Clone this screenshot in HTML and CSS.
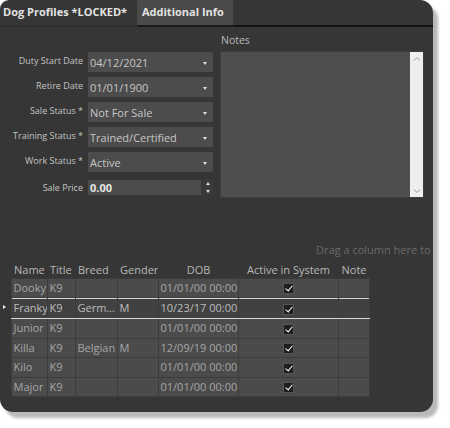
FILE: index.html
```html
<!DOCTYPE html>
<html>
<head>
<meta charset="utf-8">
<link rel="stylesheet" href="styles.css">
</head>
<body>
<div class="window">
  <div class="tabs">
    <div class="tab active">Dog Profiles *LOCKED*</div>
    <div class="tab">Additional Info</div>
    <div class="tab-fill"></div>
  </div>
  <div class="top">
    <div class="form">
      <label>Duty Start Date</label>
      <div class="combo"><span>04/12/2021</span><i class="arrow"></i></div>
      <label>Retire Date</label>
      <div class="combo"><span>01/01/1900</span><i class="arrow"></i></div>
      <label>Sale Status *</label>
      <div class="combo"><span>Not For Sale</span><i class="arrow"></i></div>
      <label>Training Status *</label>
      <div class="combo"><span>Trained/Certified</span><i class="arrow"></i></div>
      <label>Work Status *</label>
      <div class="combo"><span>Active</span><i class="arrow"></i></div>
      <label class="price-label">Sale Price</label>
      <div class="spin"><div class="spin-box">0.00</div><div class="spin-btns"><i class="up"></i><i class="down"></i></div></div>
    </div>
    <div class="notes">
      <div class="notes-title">Notes</div>
      <div class="textarea">
        <div class="vscroll">
          <svg width="8" height="6" viewBox="0 0 8 6"><path d="M1 4.5 L4 1.5 L7 4.5" fill="none" stroke="#9a9a9a" stroke-width="1"/></svg>
          <svg width="8" height="6" viewBox="0 0 8 6"><path d="M1 1.5 L4 4.5 L7 1.5" fill="none" stroke="#9a9a9a" stroke-width="1"/></svg>
        </div>
      </div>
    </div>
  </div>
  <div class="group-panel"><span>Drag a column here to</span></div>
  <table class="grid">
    <colgroup>
      <col class="c-ind"><col class="c-name"><col class="c-title"><col class="c-breed"><col class="c-gender"><col class="c-dob"><col class="c-active"><col class="c-note">
    </colgroup>
    <thead>
      <tr><th></th><th>Name</th><th>Title</th><th>Breed</th><th>Gender</th><th class="center">DOB</th><th class="center">Active in System</th><th class="center">Note</th></tr>
    </thead>
    <tbody>
      <tr><td class="ind"></td><td>Dooky</td><td>K9</td><td></td><td></td><td>01/01/00 00:00</td><td class="center"><span class="chk"></span></td><td></td></tr>
      <tr class="sel"><td class="ind"><i class="rowmark"></i></td><td>Franky</td><td>K9</td><td>Germ…</td><td>M</td><td>10/23/17 00:00</td><td class="center"><span class="chk"></span></td><td></td></tr>
      <tr><td class="ind"></td><td>Junior</td><td>K9</td><td></td><td></td><td>01/01/00 00:00</td><td class="center"><span class="chk"></span></td><td></td></tr>
      <tr><td class="ind"></td><td>Killa</td><td>K9</td><td>Belgian</td><td>M</td><td>12/09/19 00:00</td><td class="center"><span class="chk"></span></td><td></td></tr>
      <tr><td class="ind"></td><td>Kilo</td><td>K9</td><td></td><td></td><td>01/01/00 00:00</td><td class="center"><span class="chk"></span></td><td></td></tr>
      <tr><td class="ind"></td><td>Major</td><td>K9</td><td></td><td></td><td>01/01/00 00:00</td><td class="center"><span class="chk"></span></td><td></td></tr>
    </tbody>
  </table>
</div>
</body>
</html>
```
FILE: styles.css
```css
* { box-sizing: border-box; }
html, body { margin: 0; padding: 0; background: #ffffff; }
body { width: 450px; height: 428px; overflow: hidden; font-family: "Open Sans", "Noto Sans", sans-serif; }

.window {
  width: 433px;
  height: 412px;
  background: #363636;
  border-radius: 9px 13px 13px 13px;
  box-shadow: 5px 6px 3px rgba(0,0,0,0.28);
  overflow: hidden;
  position: relative;
}

.tabs {
  display: flex;
  height: 27px;
}
.tab {
  height: 27px;
  padding: 4px 4px 0 3px;
  font-size: 11px;
  font-weight: bold;
  color: #e2e2e2;
  white-space: nowrap;
  border-bottom: 2px solid #1a1a1a;
}
.tab.active {
  width: 136px;
  border-bottom: 1px solid #2c2c2c;
}
.tab:not(.active) {
  width: 96px;
  background: #4a4a4a;
  padding-left: 5px;
  margin-left: 1px;
}
.tab-fill { flex: 1; border-bottom: 2px solid #141414; }

.top {
  display: flex;
  height: 172px;
}
.form {
  display: grid;
  grid-template-columns: 83px 125px;
  grid-auto-rows: 20px;
  column-gap: 5px;
  row-gap: 5px;
  padding-top: 25px;
  width: 220px;
}
.form label {
  font-size: 9px;
  color: #c4c4c4;
  text-align: right;
  line-height: 18px;
  white-space: nowrap;
}
.combo {
  background: #4c4c4c;
  display: flex;
  align-items: center;
  justify-content: space-between;
  padding: 0 6px 0 2px;
  font-size: 11px;
  color: #c6c6c6;
}
.arrow {
  width: 0; height: 0;
  border-left: 2.5px solid transparent;
  border-right: 2.5px solid transparent;
  border-top: 3px solid #e0e0e0;
  margin-top: 2px;
}
.price-label { line-height: 15px !important; margin-top: 3px; }
.spin { display: flex; height: 15px; margin-top: 3px; gap: 1px; }
.spin-box {
  width: 113px;
  background: #4c4c4c;
  font-size: 11px;
  font-weight: bold;
  color: #e4e4e4;
  line-height: 15px;
  padding-left: 2px;
}
.spin-btns {
  width: 11px;
  display: flex;
  flex-direction: column;
  justify-content: space-around;
  align-items: center;
  background: #3a3a3a;
}
.spin-btns .up { width: 0; height: 0; border-left: 2.5px solid transparent; border-right: 2.5px solid transparent; border-bottom: 3px solid #e0e0e0; }
.spin-btns .down { width: 0; height: 0; border-left: 2.5px solid transparent; border-right: 2.5px solid transparent; border-top: 3px solid #e0e0e0; }

.notes { width: 204px; display: flex; flex-direction: column; }
.notes-title {
  font-size: 10.5px;
  color: #b8b8b8;
  height: 24px;
  padding-top: 6px;
  padding-left: 1px;
  line-height: 14px;
}
.textarea {
  height: 147px;
  background: #4e4e4e;
  border: 1px solid #3e3e3e;
  display: flex;
  justify-content: flex-end;
}
.vscroll {
  width: 13px;
  background: #efefef;
  display: flex;
  flex-direction: column;
  justify-content: space-between;
  align-items: center;
  padding: 4px 0 3px;
}

.group-panel {
  height: 63px;
  display: flex;
  justify-content: flex-start;
  padding-left: 316px;
  padding-top: 44px;
  overflow: hidden;
  white-space: nowrap;
}
.group-panel span { font-size: 11px; color: #6a6a6a; line-height: 14px; }

.grid {
  border-collapse: collapse;
  table-layout: fixed;
  width: 369px;
  font-size: 11px;
}
.c-ind { width: 11px; }
.c-name { width: 36px; }
.c-title { width: 28px; }
.c-breed { width: 42px; }
.c-gender { width: 41px; }
.c-dob { width: 80px; }
.c-active { width: 100px; }
.c-note { width: 31px; }

.grid th {
  font-weight: normal;
  color: #b8b8b8;
  text-align: left;
  height: 16px;
  padding: 0 2px 0 3px;
  line-height: 14px;
  white-space: nowrap;
  overflow: hidden;
}
.grid th.center, .grid td.center { text-align: center; }
.grid td {
  background: #4b4b4b;
  border: 1px solid #3c3c3c;
  color: #a6a6a6;
  height: 19.5px;
  padding: 0 2px;
  white-space: nowrap;
  overflow: hidden;
  line-height: 16px;
}
.grid td.ind { background: #363636; border: none; position: relative; }
.grid tr.sel td:not(.ind) {
  background: #414141;
  color: #bdbdbd;
  box-shadow: inset 0 1px 0 #d8d8d8;
  border-bottom-color: #d8d8d8;
  height: 21px;
}
.rowmark {
  position: absolute;
  left: 3px; top: 7px;
  width: 0; height: 0;
  border-top: 2.5px solid transparent;
  border-bottom: 2.5px solid transparent;
  border-left: 3px solid #f0f0f0;
}
.chk {
  display: inline-block;
  width: 11px; height: 11px;
  background: #1e1e1e;
  border: 1px solid #555;
  vertical-align: middle;
  position: relative;
}
.chk::after {
  content: "";
  position: absolute;
  left: 3px; top: 0px;
  width: 3px; height: 6px;
  border-right: 1.6px solid #fff;
  border-bottom: 1.6px solid #fff;
  transform: rotate(40deg);
}
```
